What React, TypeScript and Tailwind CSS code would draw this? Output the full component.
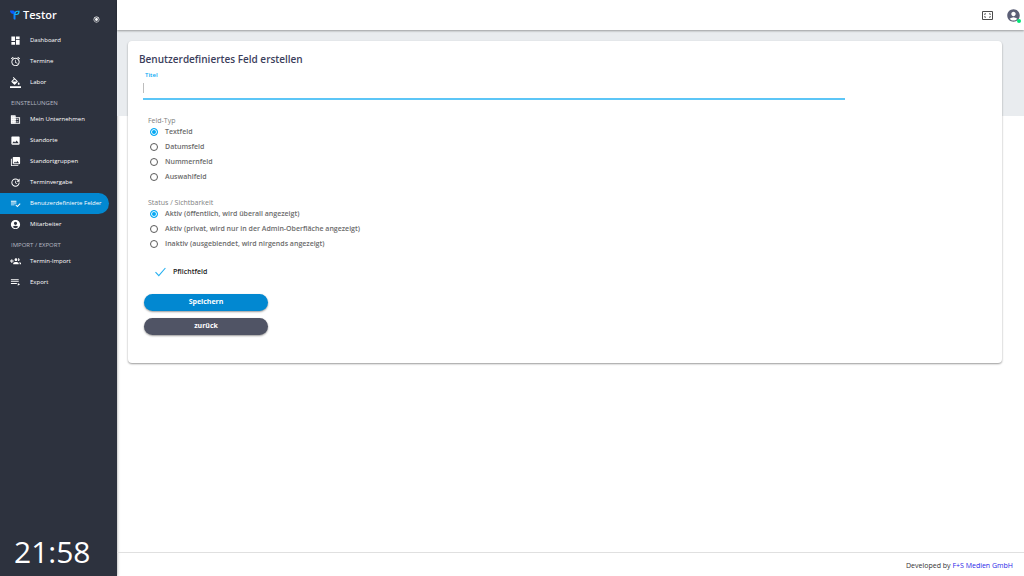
import { useState } from "react";
import type { ComponentType, ReactNode } from "react";
import {
  MdAccountCircle,
  MdAlarm,
  MdCollections,
  MdDashboard,
  MdImage,
  MdRadioButtonChecked,
  MdUpdate,
} from "react-icons/md";

type IconProps = { className?: string };
type NavItem = { label: string; icon: ComponentType<IconProps> };

function FillIcon({ className }: IconProps) {
  return (
    <svg viewBox="0 0 24 24" className={className} fill="currentColor" aria-hidden="true">
      <path d="M16.560 8.940L7.620 0 6.210 1.410l2.380 2.380-5.150 5.150c-.59.59-.59 1.540 0 2.120l5.500 5.500c.29.29.68.44 1.060.44s.77-.15 1.060-.44l5.500-5.500c.59-.58.59-1.530 0-2.120zM5.210 10L10 5.210 14.790 10H5.210zM19 11.500s-2 2.170-2 3.500c0 1.100.9 2 2 2s2-.9 2-2c0-1.330-2-3.500-2-3.500zM0 20h24v4H0z" />
    </svg>
  );
}

function CompanyIcon({ className }: IconProps) {
  return (
    <svg viewBox="0 0 24 24" className={className} fill="currentColor" aria-hidden="true">
      <path d="M2 3h10v18H2z" opacity="0.75" />
      <path d="M12 7V3H2v18h20V7H12zM6 19H4v-2h2v2zm0-4H4v-2h2v2zm0-4H4V9h2v2zm0-4H4V5h2v2zm4 12H8v-2h2v2zm0-4H8v-2h2v2zm0-4H8V9h2v2zm0-4H8V5h2v2zm10 12h-8v-2h2v-2h-2v-2h2v-2h-2V9h8v10zm-2-8h-2v2h2v-2zm0 4h-2v2h2v-2z" />
    </svg>
  );
}

function ListCheckIcon({ className }: IconProps) {
  return (
    <svg viewBox="0 0 24 24" className={className} fill="currentColor" aria-hidden="true">
      <path d="M14 10H2v2h12v-2zm0-4H2v2h12V6zM2 16h8v-2H2v2zm19.500-4.500L23 13l-6.990 7-4.510-4.500L13 14l3.010 3 5.490-5.500z" />
    </svg>
  );
}

function GroupAddIcon({ className }: IconProps) {
  return (
    <svg viewBox="0 0 24 24" className={className} fill="currentColor" aria-hidden="true">
      <path d="M8 10H5V7H3v3H0v2h3v3h2v-3h3v-2zm10 1c1.660 0 2.990-1.340 2.990-3S19.660 5 18 5c-.32 0-.63.05-.91.14.57.81.9 1.790.9 2.860s-.34 2.040-.9 2.860c.28.09.59.14.91.14zm-5 0c1.660 0 2.990-1.340 2.990-3S14.660 5 13 5c-1.660 0-3 1.340-3 3s1.340 3 3 3zm6.620 2.160c.83.73 1.380 1.660 1.380 2.840v2h3v-2c0-1.540-2.370-2.490-4.380-2.840zM13 13c-2 0-6 1-6 3v2h12v-2c0-2-4-3-6-3z" />
    </svg>
  );
}

function ListPlayIcon({ className }: IconProps) {
  return (
    <svg viewBox="0 0 24 24" className={className} fill="currentColor" aria-hidden="true">
      <path d="M19 9H2v2h17V9zm0-4H2v2h17V5zM2 15h13v-2H2v2zm15-2v6l5-3-5-3z" />
    </svg>
  );
}

const MAIN_NAV: NavItem[] = [
  { label: "Dashboard", icon: MdDashboard },
  { label: "Termine", icon: MdAlarm },
  { label: "Labor", icon: FillIcon },
];

const SETTINGS_NAV: NavItem[] = [
  { label: "Mein Unternehmen", icon: CompanyIcon },
  { label: "Standorte", icon: MdImage },
  { label: "Standortgruppen", icon: MdCollections },
  { label: "Terminvergabe", icon: MdUpdate },
  { label: "Benutzerdefinierte Felder", icon: ListCheckIcon },
  { label: "Mitarbeiter", icon: MdAccountCircle },
];

const IMPORT_NAV: NavItem[] = [
  { label: "Termin-Import", icon: GroupAddIcon },
  { label: "Export", icon: ListPlayIcon },
];

const FIELD_TYPES = ["Textfeld", "Datumsfeld", "Nummernfeld", "Auswahlfeld"];

const STATUS_OPTIONS = [
  "Aktiv (öffentlich, wird überall angezeigt)",
  "Aktiv (privat, wird nur in der Admin-Oberfläche angezeigt)",
  "Inaktiv (ausgeblendet, wird nirgends angezeigt)",
];

function Logo() {
  return (
    <svg viewBox="0 0 20 20" className="size-[10px]" aria-hidden="true">
      <path d="M0 1h6c3 0 4 2 4 5v2c-5 0-10-1-10-7z" fill="#0b5cff" />
      <path d="M7 8h4v11H9c-1 0-2-1-2-2z" fill="#0b84ff" />
      <path d="M18 2.500h-3c-3 0-5 1.500-5 5V9h3c3 0 5-2.500 5-6.500z" fill="none" stroke="#12b5f5" strokeWidth="2.400" />
    </svg>
  );
}

function NavList({ items, active }: { items: NavItem[]; active?: string }) {
  return (
    <ul>
      {items.map(({ label, icon: Icon }) => {
        const current = label === active;
        return (
          <li key={label} className="pr-2">
            <a
              href="#"
              aria-current={current ? "page" : undefined}
              className={`flex h-[21px] items-center gap-[9px] rounded-r-full pl-[10px] text-[6px] whitespace-nowrap text-white ${
                current ? "bg-[#0288d1]" : ""
              }`}
            >
              <Icon className="size-[11px] shrink-0" />
              {label}
            </a>
          </li>
        );
      })}
    </ul>
  );
}

function NavHeading({ children }: { children: ReactNode }) {
  return <h2 className="h-4 pt-1 pl-[11px] text-[6px] leading-3 text-[#b4b8c2]">{children}</h2>;
}

function RadioGroup({ legend, name, options }: { legend: string; name: string; options: string[] }) {
  const [value, setValue] = useState(options[0]);
  return (
    <fieldset>
      <legend className="text-[7px] leading-[9px] text-[#808080]">{legend}</legend>
      {options.map((option) => (
        <label
          key={option}
          className="flex h-[15px] items-center gap-[7px] pl-[2px] text-[7px] font-semibold text-[#6b6b6b]"
        >
          <input
            type="radio"
            name={name}
            checked={value === option}
            onChange={() => setValue(option)}
            className="mb-[2px] size-2 shrink-0 appearance-none rounded-full border border-[#5a5a5a] bg-white checked:border-[#03a9f4] checked:bg-[#03a9f4] checked:shadow-[inset_0_0_0_1px_white]"
          />
          {option}
        </label>
      ))}
    </fieldset>
  );
}

function Sidebar() {
  return (
    <aside className="flex w-[117px] shrink-0 flex-col bg-[#2d323e] shadow-[0_0_3px_rgba(0,0,0,0.4)]">
      <div className="flex h-[30px] items-center justify-between pr-[17px] pl-[10px]">
        <a href="#" className="flex items-center gap-[3px] text-[11px] font-semibold text-white">
          <Logo />
          Testor
        </a>
        <button type="button" aria-label="Menü fixieren" className="pt-2 text-white">
          <MdRadioButtonChecked className="size-[7px]" />
        </button>
      </div>
      <nav>
        <NavList items={MAIN_NAV} />
        <NavHeading>EINSTELLUNGEN</NavHeading>
        <NavList items={SETTINGS_NAV} active="Benutzerdefinierte Felder" />
        <NavHeading>IMPORT / EXPORT</NavHeading>
        <NavList items={IMPORT_NAV} />
      </nav>
      <time className="mt-auto pb-1 pl-[14px] text-[30px] leading-10 text-white">21:58</time>
    </aside>
  );
}

function TopBar() {
  return (
    <header className="relative flex h-[30px] items-center justify-end gap-[13px] bg-white pr-[3px] shadow-[0_1px_2px_rgba(0,0,0,0.35)]">
      <button type="button" aria-label="Vollbild">
        <svg viewBox="0 0 22 18" className="h-[9px] w-[11px]" fill="none" stroke="#4c4c4c" aria-hidden="true">
          <path d="M1 1h20v16H1z" strokeWidth="2" />
          <path d="M5.500 8V5.500H8M14 5.500h2.500V8M16.500 10v2.500H14M8 12.500H5.500V10" strokeWidth="1.600" />
        </svg>
      </button>
      <button type="button" aria-label="Konto" className="relative text-[#5b5f76]">
        <MdAccountCircle className="size-[15px]" />
        <span className="absolute right-0 bottom-0 size-1 rounded-full bg-[#00e676]" />
      </button>
    </header>
  );
}

export default function App() {
  const [title, setTitle] = useState("");
  const [required, setRequired] = useState(true);

  return (
    <div className="flex min-h-screen bg-white font-['Open_Sans','Noto_Sans',sans-serif]">
      <Sidebar />
      <div className="flex min-w-0 flex-1 flex-col">
        <TopBar />
        <main className="flex-1 bg-[linear-gradient(#e9ecef,#e9ecef)] bg-[length:100%_86px] bg-no-repeat pt-[11px] pr-[22px] pl-[11px]">
          <form
            onSubmit={(event) => event.preventDefault()}
            className="rounded-[4px] bg-white px-[11px] pt-[10px] pb-7 shadow-[0_1px_2px_rgba(0,0,0,0.4)]"
          >
            <h1 className="text-[10px] leading-4 font-semibold text-[#3b3e5b]">Benutzerdefiniertes Feld erstellen</h1>
            <div className="mr-[146px] ml-1">
              <label htmlFor="title" className="block pt-1 pl-[2px] text-[6px] leading-2 font-semibold text-[#03a9f4]">
                Titel
              </label>
              <div className="relative border-b-2 border-[#5cc6f7]">
                <input
                  id="title"
                  type="text"
                  value={title}
                  onChange={(event) => setTitle(event.target.value)}
                  className="block h-[19px] w-full bg-transparent px-[2px] text-[8px] text-[#444444] outline-none"
                />
                <span className="absolute top-1 left-0 h-[10px] w-px bg-[#bdbdbd]" />
              </div>
            </div>

            <div className="flex flex-col gap-[13px] pt-4 pl-[9px]">
              <RadioGroup legend="Feld-Typ" name="type" options={FIELD_TYPES} />
              <RadioGroup legend="Status / Sichtbarkeit" name="status" options={STATUS_OPTIONS} />
            </div>

            <label className="mt-3 ml-4 flex h-4 w-fit items-center gap-[7px] text-[7px] font-semibold text-[#222222]">
              <span className="relative flex size-[11px]">
                <input
                  type="checkbox"
                  checked={required}
                  onChange={(event) => setRequired(event.target.checked)}
                  className="peer size-full appearance-none"
                />
                <svg
                  viewBox="0 0 11 11"
                  className="pointer-events-none invisible absolute inset-0 peer-checked:visible"
                  fill="none"
                  stroke="#26b0f0"
                  aria-hidden="true"
                >
                  <path d="M.5 5.200 3.800 8.600 10.400 1" strokeWidth="1.100" />
                </svg>
              </span>
              Pflichtfeld
            </label>

            <div className="mt-[14px] ml-[5px] flex w-[124px] flex-col gap-[7px] text-[7px] font-bold text-white">
              <button type="submit" className="h-[17px] rounded-full bg-[#0288d1] shadow-[0_1px_2px_rgba(0,0,0,0.4)]">
                Speichern
              </button>
              <button type="button" className="h-[17px] rounded-full bg-[#505465] shadow-[0_1px_2px_rgba(0,0,0,0.4)]">
                zurück
              </button>
            </div>
          </form>
        </main>
        <footer className="flex h-6 items-center justify-end border-t border-[#e0e0e0] pt-[3px] pr-[11px] text-[7px] text-[#333333]">
          <p>
            Developed by{" "}
            <a href="#" className="text-[#2a1ee8]">
              F+S Medien GmbH
            </a>
          </p>
        </footer>
      </div>
    </div>
  );
}
